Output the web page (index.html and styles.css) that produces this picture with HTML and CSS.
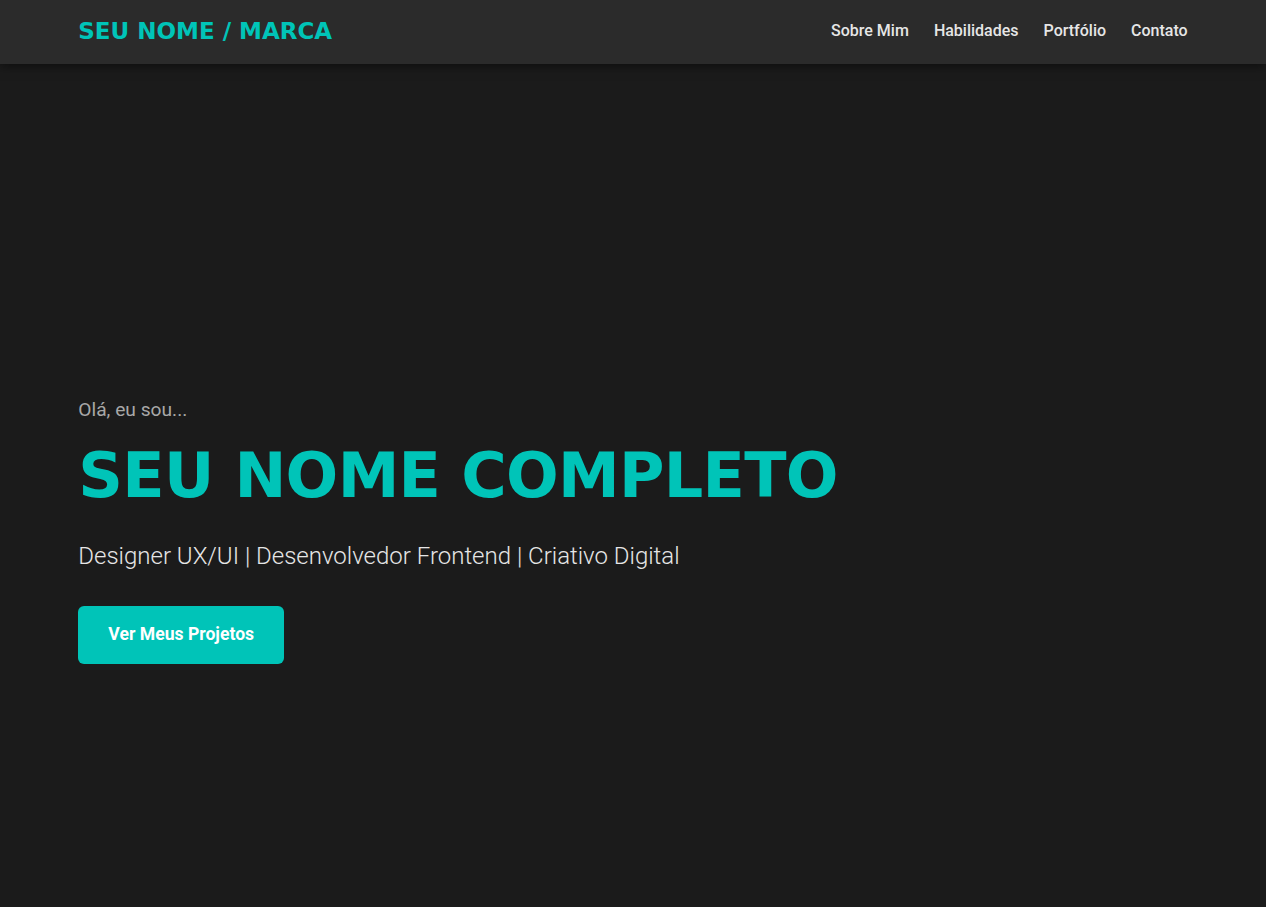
FILE: index.html
```html
<!DOCTYPE html>
<html lang="pt-BR">
<head>
<meta charset="utf-8">
<title>Portfólio</title>
<link rel="stylesheet" href="styles.css">
</head>
<body>
<header class="site-header">
  <div class="container nav-wrap">
    <a class="logo" href="#">SEU NOME / MARCA</a>
    <nav class="nav">
      <a href="#sobre">Sobre Mim</a>
      <a href="#habilidades">Habilidades</a>
      <a href="#portfolio">Portfólio</a>
      <a href="#contato">Contato</a>
    </nav>
  </div>
</header>
<section class="hero">
  <div class="container hero-content">
    <p class="intro">Olá, eu sou...</p>
    <h1 class="name">SEU NOME COMPLETO</h1>
    <p class="tagline">Designer UX/UI | Desenvolvedor Frontend | Criativo Digital</p>
    <a class="btn" href="#portfolio">Ver Meus Projetos</a>
  </div>
</section>
</body>
</html>
```
FILE: styles.css
```css
* { box-sizing: border-box; }
html, body { margin: 0; padding: 0; }
body {
  background: #1b1b1b;
  color: #e0e0e0;
  font-family: Roboto, "Liberation Sans", sans-serif;
}
.container {
  width: 90%;
  max-width: 1200px;
  margin: 0 auto;
  padding: 0 15px;
}
.site-header {
  position: relative;
  z-index: 2;
  height: 64px;
  background: #2b2b2b;
  box-shadow: 0 2px 10px rgba(0, 0, 0, 0.5);
}
.nav-wrap {
  height: 100%;
  padding-bottom: 3px;
  display: flex;
  align-items: center;
  justify-content: space-between;
}
.logo {
  font-family: "DejaVu Sans", sans-serif;
  font-weight: 700;
  font-size: 23px;
  color: #00c4b8;
  text-decoration: none;
}
.nav {
  display: flex;
  gap: 25px;
}
.nav a {
  color: #e6e6e6;
  text-decoration: none;
  font-size: 16px;
  font-weight: 500;
}
.hero {
  height: calc(100vh - 64px);
  padding-top: 89px;
  display: flex;
  align-items: center;
}
.hero-content { width: 90%; }
.intro {
  margin: 0 0 14px;
  font-size: 19.2px;
  line-height: 1.5;
  color: #a8a8a8;
}
.name {
  margin: 0 0 24px;
  font-family: "DejaVu Sans", sans-serif;
  font-weight: 700;
  font-size: 62px;
  letter-spacing: -0.7px;
  line-height: 1.2;
  color: #00c4b8;
}
.tagline {
  margin: 0 0 32px;
  font-size: 24px;
  font-weight: 300;
  line-height: 1.5;
  color: #e6e6e6;
}
.btn {
  display: inline-block;
  padding: 18px 30px 19px;
  background: #00c4b8;
  color: #fff;
  font-weight: 700;
  font-size: 17.6px;
  line-height: 1.2;
  border-radius: 6px;
  text-decoration: none;
}
```
